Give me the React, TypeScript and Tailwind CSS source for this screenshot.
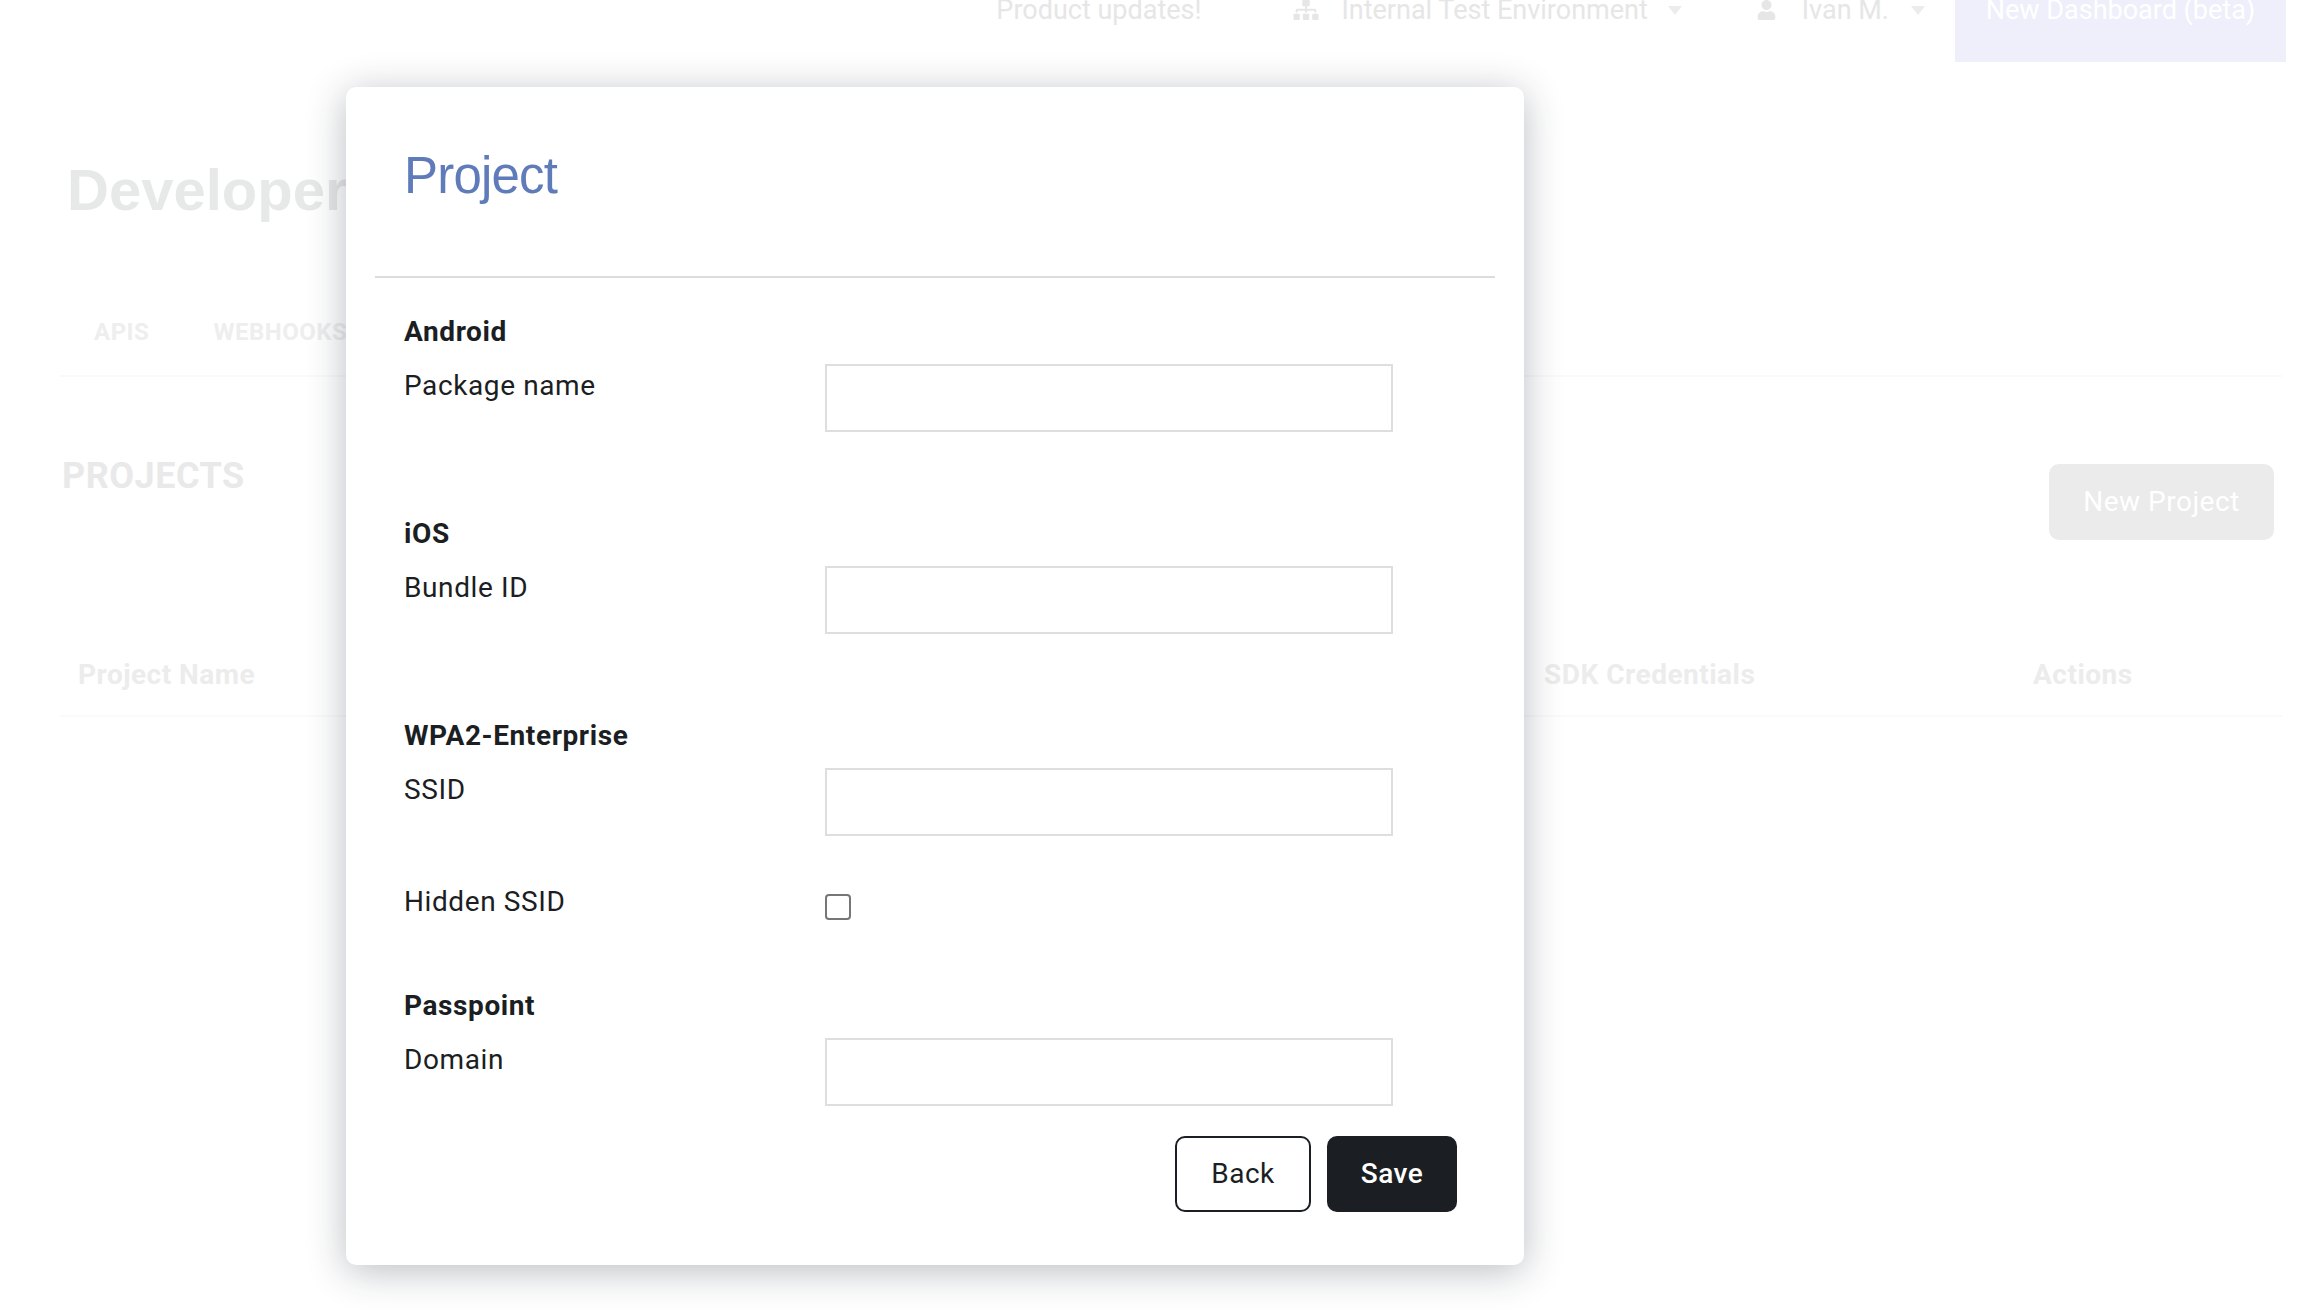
import { FaSitemap, FaUser } from "react-icons/fa"

const roboto = "font-['Roboto',sans-serif]"

function Caret({ className }: { className: string }) {
  return <span className={`mt-[6px] h-0 w-0 border-x-[7px] border-t-[9px] border-x-transparent border-t-[#ececec] ${className}`} />
}

function Nav() {
  return (
    <nav className="flex justify-end pr-[20px] text-[27px] leading-[20px] text-[#e6e6e6]">
      <span className="mr-[92px]">Product updates!</span>
      <span className="mr-[74px] flex items-start">
        <FaSitemap className="mr-[22px] h-[20px] w-[26px]" />
        Internal Test Environment
        <Caret className="ml-[20px]" />
      </span>
      <span className="mr-[30px] flex items-start">
        <FaUser className="mr-[25px] h-[20px] w-[21px]" />
        Ivan M.
        <Caret className="ml-[22px]" />
      </span>
      <span className="flex h-[62px] w-[331px] justify-center bg-[#eeeffa] text-white">New Dashboard (beta)</span>
    </nav>
  )
}

function Background() {
  return (
    <div className="text-[#e9e9e9]">
      <Nav />
      <h1 className="ml-[67px] mt-[94px] font-['Liberation_Sans',sans-serif] text-[58px] font-bold leading-[68px] text-[#e7e8e8]">Developer</h1>
      <div className="ml-[60px] mr-[24px] mt-[94px] flex gap-[64px] border-b-2 border-[#fafafa] pb-[29px] pl-[34px] text-[24px] font-bold leading-[28px] tracking-[0.5px] text-[#eeeeee]">
        <span>APIS</span>
        <span>WEBHOOKS</span>
      </div>
      <div className="ml-[62px] mr-[32px] mt-[68px] flex items-start justify-between">
        <h2 className="mt-[10px] text-[36px] font-bold leading-[42px] tracking-[0.5px]">PROJECTS</h2>
        <button className="mt-[19px] h-[76px] w-[225px] rounded-[10px] bg-[#ebebeb] text-[28px] tracking-[0.5px] text-white">New Project</button>
      </div>
      <div className="ml-[60px] mr-[24px] mt-[118px] grid grid-cols-[1466px_489px_1fr] border-b-2 border-[#fafafa] pb-[23px] pl-[18px] text-[28px] font-bold leading-[34px] tracking-[0.5px] text-[#ececec]">
        <span>Project Name</span>
        <span>SDK Credentials</span>
        <span>Actions</span>
      </div>
    </div>
  )
}

function Field({ label }: { label: string }) {
  return (
    <div className="grid grid-cols-[421px_568px]">
      <label className="pt-[2px] text-[28px] leading-[40px] tracking-[0.6px]">{label}</label>
      <input className="h-[68px] border-2 border-[#dedede] bg-white" />
    </div>
  )
}

function Heading({ children }: { children: string }) {
  return <h3 className="mb-[12px] text-[28px] font-bold leading-[40px] tracking-[0.6px]">{children}</h3>
}

function Modal() {
  return (
    <div className={`${roboto} absolute left-[346px] top-[87px] h-[1178px] w-[1178px] rounded-[10px] bg-white text-[#1b1e22] shadow-[0_6px_38px_rgba(30,38,56,0.3)]`}>
      <h2 className="px-[58px] pt-[61px] font-['Liberation_Sans',sans-serif] text-[51px] leading-[56px] tracking-[-0.8px] text-[#5f7bb9]">Project</h2>
      <div className="mx-[29px] mt-[72px] border-t-2 border-[#dcdcdc]" />
      <div className="px-[58px] pt-[34px]">
        <Heading>Android</Heading>
        <Field label="Package name" />
        <div className="mt-[82px]">
          <Heading>iOS</Heading>
          <Field label="Bundle ID" />
        </div>
        <div className="mt-[82px]">
          <Heading>WPA2-Enterprise</Heading>
          <Field label="SSID" />
        </div>
        <div className="mt-[46px] grid grid-cols-[421px_568px]">
          <label className="text-[28px] leading-[40px] tracking-[0.6px]">Hidden SSID</label>
          <input type="checkbox" className="mt-[12px] h-[26px] w-[26px] appearance-none rounded-[4px] border-2 border-[#767676] bg-white" />
        </div>
        <div className="mt-[64px]">
          <Heading>Passpoint</Heading>
          <Field label="Domain" />
        </div>
      </div>
      <div className="mr-[67px] mt-[30px] flex justify-end gap-[16px] text-[28px] tracking-[0.5px]">
        <button className="h-[76px] w-[136px] rounded-[10px] border-2 border-[#1b1e22] bg-white">Back</button>
        <button className="h-[76px] w-[130px] rounded-[10px] bg-[#1b1e22] font-medium text-white">Save</button>
      </div>
    </div>
  )
}

export default function App() {
  return (
    <div className={`${roboto} relative h-[1310px] w-[2306px] overflow-hidden bg-white`}>
      <Background />
      <Modal />
    </div>
  )
}
